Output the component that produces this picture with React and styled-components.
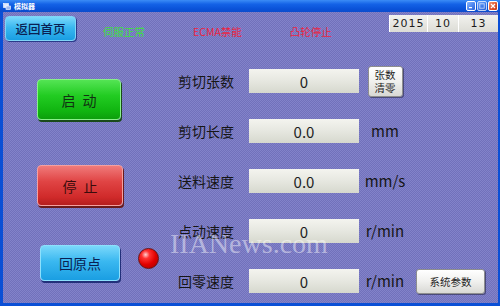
import React from 'react';
import styled, { createGlobalStyle } from 'styled-components';

const GlobalStyle = createGlobalStyle`
  html, body {
    margin: 0;
    padding: 0;
    background: #ffffff;
  }
  body {
    font-family: "Noto Sans CJK SC", "Noto Sans", sans-serif;
  }
`;

const Window = styled.div`
  position: relative;
  width: 500px;
  height: 306px;
  display: flex;
  flex-direction: column;
  overflow: hidden;
  background: #0a4fd6;
`;

const TitleBar = styled.div`
  height: 12px;
  display: flex;
  align-items: center;
  padding: 0 2px 0 3px;
  background: linear-gradient(#3b8cf6 0%, #1462e6 35%, #0a52d8 75%, #0c4ccc 100%);
`;

const TitleText = styled.span`
  margin-left: 3px;
  font-size: 7px;
  line-height: 10px;
  font-weight: 700;
  color: #ffffff;
`;

const Controls = styled.div`
  margin-left: auto;
  display: flex;
  gap: 1px;
`;

const CtrlBtn = styled.div`
  width: 10px;
  height: 10px;
  border-radius: 2px;
  border: 1px solid #ffffff;
  box-sizing: border-box;
  display: flex;
  align-items: center;
  justify-content: center;
  background: ${({ $close }) =>
    $close
      ? 'linear-gradient(135deg, #f29a78 0%, #e2542e 55%, #c63a18 100%)'
      : 'linear-gradient(135deg, #8cb6fa 0%, #4c86f0 55%, #2a62d8 100%)'};
  opacity: ${({ $dim }) => ($dim ? 0.75 : 1)};
`;

const Body = styled.div`
  flex: 1;
  margin: 0 2px 3px 3px;
  display: flex;
  flex-direction: column;
  background-color: #7a7ac3;
  background-image: repeating-conic-gradient(#8383ca 0 25%, #7171bb 0 50%);
  background-size: 2px 2px;
`;

const TopBar = styled.div`
  height: 30px;
  display: flex;
  align-items: flex-start;
  padding-left: 2px;
`;

const BackButton = styled.button`
  margin-top: 4px;
  width: 71px;
  height: 25px;
  padding: 0;
  border: 1px solid #7fd4f6;
  border-radius: 4px;
  background: linear-gradient(#7ad8fb 0%, #3ab8f0 45%, #1a9ee2 100%);
  box-shadow: 1px 1px 0 #2a3a8a;
  font-family: "Noto Sans CJK SC", sans-serif;
  font-size: 12.5px;
  font-weight: 500;
  line-height: 23px;
  color: #0a1f52;
`;

const Statuses = styled.div`
  margin-left: 27px;
  margin-top: 14px;
  display: flex;
  gap: 48px;
`;

const StatusText = styled.span`
  font-size: 10.5px;
  line-height: 12px;
  color: ${({ $ok }) => ($ok ? '#3ee03e' : '#ec2440')};
`;

const DateBox = styled.div`
  margin-left: auto;
  margin-top: 3px;
  height: 17px;
  display: flex;
`;

const DateCell = styled.div`
  width: ${({ $w }) => $w}px;
  box-sizing: border-box;
  display: flex;
  align-items: center;
  justify-content: center;
  background: linear-gradient(#f2f2ee, #dcdcd6);
  border-left: 1px solid #ffffff;
  font-family: "DejaVu Sans", sans-serif;
  font-size: 11px;
  letter-spacing: 1px;
  color: #1c1c1c;
`;

const Main = styled.div`
  flex: 1;
  display: flex;
`;

const LeftCol = styled.div`
  margin-left: 34px;
  width: 141px;
  display: flex;
  flex-direction: column;
  align-items: flex-start;
`;

const tones = {
  green: {
    border: '#8af08a',
    bg: 'linear-gradient(#54e454 0%, #22cc22 40%, #10b410 80%, #0c9e0c 100%)',
    text: '#123012',
    shadow: '#1a4a1a',
  },
  red: {
    border: '#f4a0a0',
    bg: 'linear-gradient(#f07a7a 0%, #e04444 40%, #d02a2a 80%, #b41e1e 100%)',
    text: '#3a0c0c',
    shadow: '#6a1a1a',
  },
  blue: {
    border: '#8ce0fc',
    bg: 'linear-gradient(#7ad8fb 0%, #3ab8f0 45%, #1a9ee2 100%)',
    text: '#0a1f52',
    shadow: '#22307a',
  },
};

const BigButton = styled.button`
  width: ${({ $w }) => $w}px;
  height: ${({ $h }) => $h}px;
  margin-top: ${({ $mt }) => $mt}px;
  margin-left: ${({ $ml }) => $ml || 0}px;
  padding: 0;
  border-radius: 4px;
  font-family: "Noto Sans CJK SC", sans-serif;
  font-size: 14px;
  line-height: 1;
  letter-spacing: ${({ $ls }) => $ls || 0}px;
  text-indent: ${({ $ls }) => $ls || 0}px;
  border: 1px solid ${({ $tone }) => tones[$tone].border};
  background: ${({ $tone }) => tones[$tone].bg};
  color: ${({ $tone }) => tones[$tone].text};
  box-shadow: 1px 2px 0 ${({ $tone }) => tones[$tone].shadow};
`;

const HomeRow = styled.div`
  display: flex;
  align-items: flex-start;
`;

const Lamp = styled.div`
  width: 21px;
  height: 21px;
  margin-left: 18px;
  margin-top: 42px;
  border-radius: 50%;
  box-sizing: border-box;
  border: 1px solid #6a1010;
  background: radial-gradient(circle at 35% 30%, #ffd0d0 0, #ff3030 22%, #e00000 55%, #a00000 100%);
`;

const Form = styled.div`
  margin-top: 27px;
  display: grid;
  grid-template-columns: 71px 110px 52px auto;
  grid-auto-rows: 24px;
  row-gap: 26px;
  align-items: center;
`;

const Label = styled.span`
  font-size: 14px;
  line-height: 16px;
  color: #161616;
`;

const ValueBox = styled.div`
  height: 24px;
  display: flex;
  align-items: center;
  justify-content: center;
  background: linear-gradient(#f4f4ef 0%, #e6e7e0 50%, #d6d8ce 100%);
  font-size: 15px;
  color: #1e1e1e;
`;

const Unit = styled.span`
  justify-self: center;
  font-size: 15px;
  line-height: 16px;
  color: #161616;
`;

const SmallButton = styled.button`
  justify-self: ${({ $center }) => ($center ? 'center' : 'start')};
  margin-left: ${({ $ml }) => $ml || 0}px;
  width: ${({ $w }) => $w}px;
  height: ${({ $h }) => $h}px;
  padding: 0;
  border: 1px solid #8e8e8e;
  border-radius: 3px;
  background: linear-gradient(#ffffff 0%, #f0f0ee 50%, #d8d8d4 100%);
  box-shadow: 1px 1px 0 #4a4a7a;
  font-family: "Noto Sans CJK SC", sans-serif;
  font-size: 10.5px;
  line-height: 13px;
  color: #1e1e1e;
`;

const Watermark = styled.div`
  position: absolute;
  left: 170px;
  top: 228px;
  font-family: "Liberation Serif", serif;
  font-size: 28px;
  line-height: 32px;
  color: rgba(255, 255, 255, 0.45);
  pointer-events: none;
`;

const rows = [
  { label: '剪切张数', value: '0', unit: null },
  { label: '剪切长度', value: '0.0', unit: 'mm' },
  { label: '送料速度', value: '0.0', unit: 'mm/s' },
  { label: '点动速度', value: '0', unit: 'r/min' },
  { label: '回零速度', value: '0', unit: 'r/min' },
];

export default function App() {
  return (
    <Window>
      <GlobalStyle />
      <TitleBar>
        <svg width="8" height="7" viewBox="0 0 8 7">
          <rect x="0.5" y="0.5" width="5" height="4" fill="#dfe8ff" stroke="#ffffff" strokeWidth="0.6" />
          <rect x="3" y="3" width="4.5" height="3.5" fill="#9fb8f0" stroke="#ffffff" strokeWidth="0.6" />
        </svg>
        <TitleText>模拟器</TitleText>
        <Controls>
          <CtrlBtn>
            <svg width="6" height="6" viewBox="0 0 6 6">
              <rect x="1" y="4" width="3" height="1.2" fill="#ffffff" />
            </svg>
          </CtrlBtn>
          <CtrlBtn $dim>
            <svg width="6" height="6" viewBox="0 0 6 6">
              <rect x="0.8" y="0.8" width="4.4" height="4.4" fill="none" stroke="#ffffff" strokeWidth="0.9" />
            </svg>
          </CtrlBtn>
          <CtrlBtn $close>
            <svg width="6" height="6" viewBox="0 0 6 6">
              <path d="M1 1 L5 5 M5 1 L1 5" stroke="#ffffff" strokeWidth="1.2" />
            </svg>
          </CtrlBtn>
        </Controls>
      </TitleBar>

      <Body>
        <TopBar>
          <BackButton>返回首页</BackButton>
          <Statuses>
            <StatusText $ok>伺服正常</StatusText>
            <StatusText>ECMA禁能</StatusText>
            <StatusText>凸轮停止</StatusText>
          </Statuses>
          <DateBox>
            <DateCell $w={38}>2015</DateCell>
            <DateCell $w={31}>10</DateCell>
            <DateCell $w={40}>13</DateCell>
          </DateBox>
        </TopBar>

        <Main>
          <LeftCol>
            <BigButton $tone="green" $w={84} $h={41} $mt={37} $ls={7}>启动</BigButton>
            <BigButton $tone="red" $w={86} $h={41} $mt={45} $ls={7}>停止</BigButton>
            <HomeRow>
              <BigButton $tone="blue" $w={80} $h={36} $mt={39} $ml={3}>回原点</BigButton>
              <Lamp />
            </HomeRow>
          </LeftCol>

          <Form>
            {rows.map((row, i) => (
              <React.Fragment key={row.label}>
                <Label>{row.label}</Label>
                <ValueBox>{row.value}</ValueBox>
                {i === 0 ? (
                  <SmallButton $center $w={35} $h={31}>张数<br />清零</SmallButton>
                ) : (
                  <Unit>{row.unit}</Unit>
                )}
                {i === 4 ? <SmallButton $ml={5} $w={69} $h={25}>系统参数</SmallButton> : <span />}
              </React.Fragment>
            ))}
          </Form>
        </Main>
      </Body>
      <Watermark>IIANews.com</Watermark>
    </Window>
  );
}
